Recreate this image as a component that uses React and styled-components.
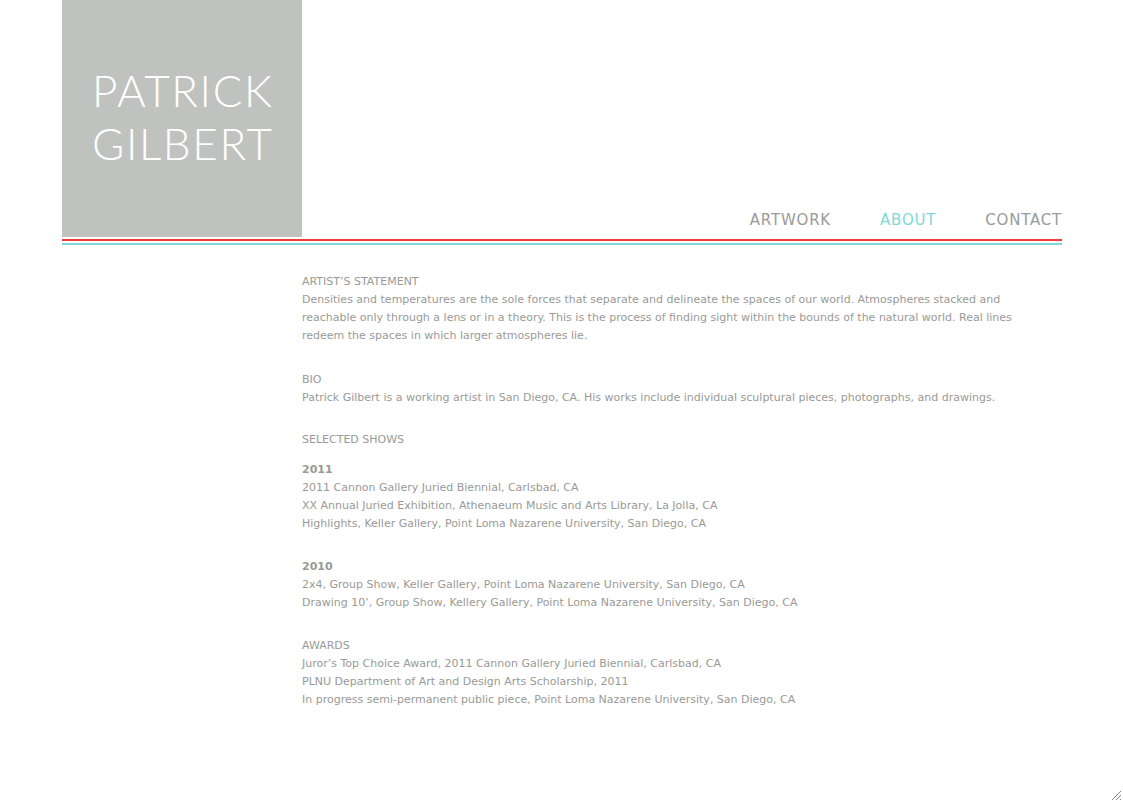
import React from "react";
import styled, { createGlobalStyle } from "styled-components";

const GlobalStyle = createGlobalStyle`
  html, body {
    margin: 0;
    padding: 0;
    background: #fff;
  }
  body {
    font-family: "DejaVu Sans", Tahoma, sans-serif;
  }
`;

const Page = styled.div`
  width: 1000px;
  margin-left: 62px;
`;

const Header = styled.header`
  display: flex;
  align-items: flex-end;
  justify-content: space-between;
`;

const Logo = styled.div`
  width: 240px;
  height: 237px;
  background-color: #bfc2bf;
  box-sizing: border-box;
  padding: 64px 0 0 30px;
`;

const LogoLine = styled.div`
  font-family: Lato, "Open Sans", sans-serif;
  font-weight: 300;
  font-size: 44px;
  line-height: 53px;
  letter-spacing: 1.6px;
  color: #fff;
`;

const Nav = styled.nav`
  display: flex;
  gap: 49px;
  padding-bottom: 8px;
`;

const NavLink = styled.a`
  font-family: "DejaVu Sans", sans-serif;
  font-size: 15px;
  letter-spacing: 0.8px;
  color: ${(p) => (p.$active ? "#7fd9db" : "#999b98")};
  text-decoration: none;
  cursor: pointer;
`;

const Rule = styled.div`
  height: 2px;
  margin-top: ${(p) => p.$gap}px;
  background-color: ${(p) => p.$color};
`;

const Content = styled.main`
  width: 712px;
  padding: 28px 0 0 240px;
  font-family: "DejaVu Sans", Tahoma, sans-serif;
  font-size: 11px;
  line-height: 18px;
  color: #999a96;
`;

const Section = styled.section`
  margin-bottom: ${(p) => p.$space ?? 26}px;
`;

const Heading = styled.div`
  text-transform: uppercase;
  margin-bottom: ${(p) => p.$space ?? 0}px;
`;

const Year = styled.div`
  font-weight: bold;
`;

const Text = styled.p`
  margin: 0;
`;

const Grip = styled.svg`
  position: fixed;
  right: 1px;
  bottom: 1px;
`;

const shows = [
  {
    year: "2011",
    items: [
      "2011 Cannon Gallery Juried Biennial, Carlsbad, CA",
      "XX Annual Juried Exhibition, Athenaeum Music and Arts Library, La Jolla, CA",
      "Highlights, Keller Gallery, Point Loma Nazarene University, San Diego, CA",
    ],
  },
  {
    year: "2010",
    items: [
      "2x4, Group Show, Keller Gallery, Point Loma Nazarene University, San Diego, CA",
      "Drawing 10’, Group Show, Kellery Gallery, Point Loma Nazarene University, San Diego, CA",
    ],
  },
];

const awards = [
  "Juror’s Top Choice Award, 2011 Cannon Gallery Juried Biennial, Carlsbad, CA",
  "PLNU Department of Art and Design Arts Scholarship, 2011",
  "In progress semi-permanent public piece, Point Loma Nazarene University, San Diego, CA",
];

const App = () => {
  return (
    <>
      <GlobalStyle />
      <Page>
        <Header>
          <Logo>
            <LogoLine>PATRICK</LogoLine>
            <LogoLine>GILBERT</LogoLine>
          </Logo>
          <Nav>
            <NavLink>ARTWORK</NavLink>
            <NavLink $active>ABOUT</NavLink>
            <NavLink>CONTACT</NavLink>
          </Nav>
        </Header>
        <Rule $gap={2} $color="#f23b3b" />
        <Rule $gap={2} $color="#7fd9db" />
        <Content>
          <Section>
            <Heading>Artist’s Statement</Heading>
            <Text>
              Densities and temperatures are the sole forces that separate and
              delineate the spaces of our world. Atmospheres stacked and
              reachable only through a lens or in a theory. This is the process
              of finding sight within the bounds of the natural world. Real
              lines redeem the spaces in which larger atmospheres lie.
            </Text>
          </Section>
          <Section $space={24}>
            <Heading>Bio</Heading>
            <Text>
              Patrick Gilbert is a working artist in San Diego, CA. His works
              include individual sculptural pieces, photographs, and drawings.
            </Text>
          </Section>
          <Heading $space={12}>Selected Shows</Heading>
          {shows.map((s) => (
            <Section key={s.year} $space={25}>
              <Year>{s.year}</Year>
              {s.items.map((i) => (
                <Text key={i}>{i}</Text>
              ))}
            </Section>
          ))}
          <Section>
            <Heading>Awards</Heading>
            {awards.map((a) => (
              <Text key={a}>{a}</Text>
            ))}
          </Section>
        </Content>
      </Page>
      <Grip width="11" height="11" viewBox="0 0 11 11">
        <path d="M10 1L1 10M10 5L5 10M10 9L9 10" stroke="#888" strokeWidth="1" />
      </Grip>
    </>
  );
};

export default App;
